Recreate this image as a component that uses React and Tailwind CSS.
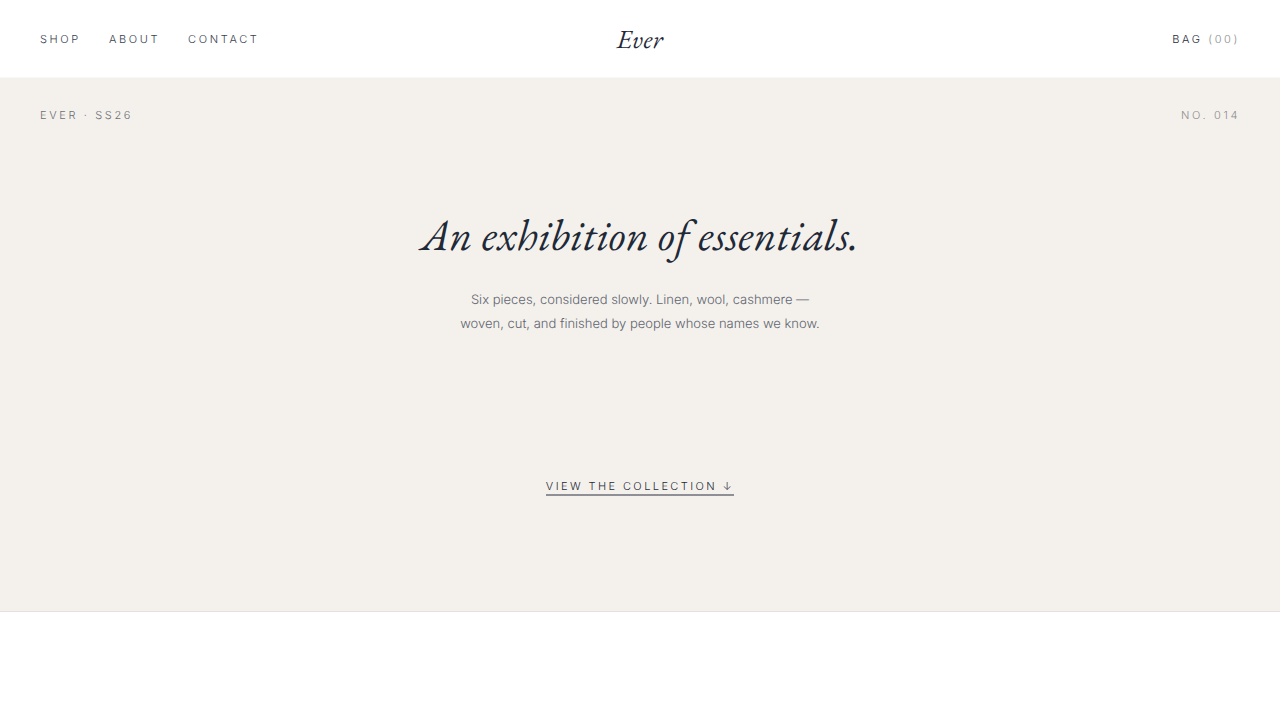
import React from 'react';

const links = ['Shop', 'About', 'Contact'];

const Header = () => (
  <header className="grid grid-cols-3 items-center h-[78px] px-10 bg-white border-b border-[#f8f8f8] text-[11px] leading-4 font-light uppercase tracking-[0.24em] text-[#374151]">
    <nav className="flex gap-7">
      {links.map((link) => (
        <a key={link} href={`#${link.toLowerCase()}`}>{link}</a>
      ))}
    </nav>
    <a
      href="#home"
      className="text-center text-[26px] leading-8 font-normal italic normal-case tracking-[0.02em] text-[#1f2937] font-['EB_Garamond','Liberation_Serif',serif]"
    >
      Ever
    </a>
    <button
      type="button"
      className="justify-self-end uppercase tracking-[0.24em] text-[#1f2937] [text-rendering:geometricPrecision]"
    >
      Bag <span className="text-[#8c8c8c]">(00)</span>
    </button>
  </header>
);

const Hero = () => (
  <section className="flex flex-col items-center bg-[#f4f1ec] border-b border-[#e5e1da] px-10 pt-[29px] pb-[115px] text-[#1f2937]">
    <div className="flex justify-between self-stretch text-[11px] leading-4 font-light uppercase tracking-[0.24em] text-[#6b6f76]">
      <span>Ever · SS26</span>
      <span className="text-[#8c8c8c]">No. 014</span>
    </div>
    <h1 className="mt-[85px] text-center text-[44px] leading-[56px] italic tracking-[0.005em] font-['EB_Garamond','Liberation_Serif',serif]">
      An exhibition of essentials.
    </h1>
    <p className="mt-6 max-w-[384px] text-center text-[13px] leading-6 font-light text-[#5f6570]">
      Six pieces, considered slowly. Linen, wool, cashmere — woven, cut, and finished by people whose names we know.
    </p>
    <a
      href="#collection"
      className="mt-[142px] border-b-2 border-[#8e9095] text-[11px] leading-4 font-light uppercase tracking-[0.22em]"
    >
      View the collection ↓
    </a>
  </section>
);

const App = () => (
  <div className="min-h-screen bg-white font-[Inter,'Liberation_Sans',sans-serif] [text-rendering:geometricPrecision]">
    <Header />
    <main>
      <Hero />
    </main>
  </div>
);

export default App;
